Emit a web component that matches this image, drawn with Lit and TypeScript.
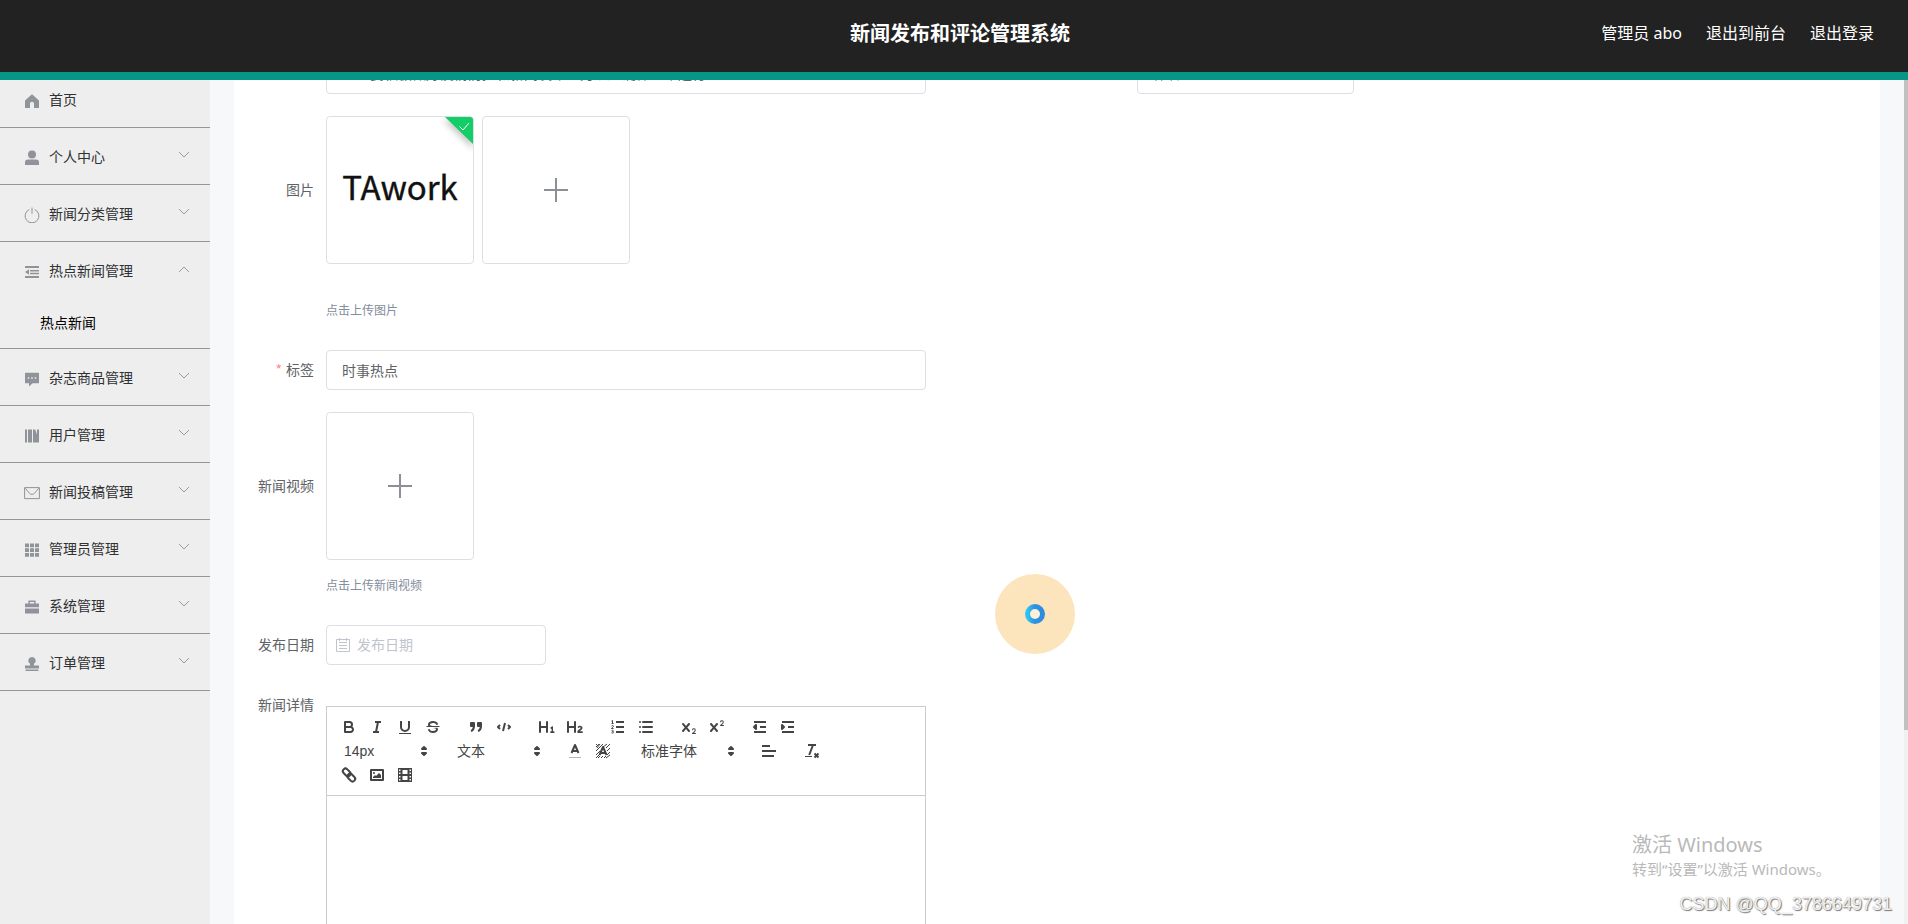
import { LitElement, html, css, svg, nothing } from "lit";
import { customElement, state } from "lit/decorators.js";

const icons: Record<string, unknown> = {
  home: svg`<path d="M8 1.2 1 7.4V15h5v-4.2a2 2 0 0 1 4 0V15h5V7.4z"/>`,
  user: svg`<circle cx="8" cy="4.6" r="4"/><path d="M1 15v-2.4a3 3 0 0 1 3-3h8a3 3 0 0 1 3 3V15z"/>`,
  power: svg`<path class="line" d="M5.3 2.6a6.9 6.9 0 1 0 5.4 0M8 .6v6.2"/>`,
  fold: svg`<path d="M1 2h14v2H1zM6 5.9h9v1.6H6zM6 8.7h9v1.6H6zM1 12h14v2H1zM5 5.2v5.6L1 8z"/>`,
  comment: svg`<path fill-rule="evenodd" d="M1 1.8h14v10.4H8.6L5 15.4v-3.2H1zM3.7 6.2v1.6h1.6V6.2zm3.5 0v1.6h1.6V6.2zm3.5 0v1.6h1.6V6.2z"/>`,
  books: svg`<path d="M1 1.5h2v13H1zM4 1.5h4v13H4zM9 1.5h2.2l1.800 5V1.5h2v13H9z"/>`,
  mail: svg`<path class="line" d="M.6 2.6h14.8v11H.6zM1.2 3.2 5.4 8.2a3.5 3.5 0 0 0 5.2 0l4.2-5"/>`,
  grid: svg`<path d="M1 1.4h4v3.8H1zM6 1.4h4v3.8H6zM11 1.4h4v3.8h-4zM1 6.2h4V10H1zM6 6.2h4V10H6zM11 6.2h4V10h-4zM1 11h4v3.8H1zM6 11h4v3.8H6zM11 11h4v3.8h-4z"/>`,
  cooperate: svg`<path fill-rule="evenodd" d="M4.4 1.6h7.2V4.4H15V8.2H1V4.4h3.4zM5.8 3v1.4h4.4V3zM1 9.4h14v5H1z"/>`,
  stamp: svg`<path d="M8 .9a3.7 3.7 0 0 1 2.2 6.7L9.8 9.4H15v3H1v-3h5.2l-.4-1.8A3.7 3.7 0 0 1 8 .9zM1.6 13.5h12.8v1.4H1.6z"/>`,
};

const q: Record<string, unknown> = {
  加粗: svg`<path class="s" d="M5,4H9.5A2.5,2.5,0,0,1,12,6.500A2.500,2.500,0,0,1,9.500,9H5ZM5,9h5.500A2.500,2.500,0,0,1,13,11.500A2.500,2.500,0,0,1,10.500,14H5Z"/>`,
  斜体: svg`<path class="s" d="M7 4h6M5 14h6M8 14l2-10"/>`,
  下划线: svg`<path class="s" d="M5,3V9a4,4,0,0,0,8,0V3"/><rect class="f" height="1" width="12" x="3" y="15"/>`,
  删除线: svg`<path class="s t" d="M15.500 8.500H2.500"/><path class="f" d="M9.007,8C6.542,7.791,6,7.519,6,6.500,6,5.792,7.283,5,9,5c1.571,0,2.765.679,2.969,1.309a1,1,0,0,0,1.900-.617C13.356,4.106,11.354,3,9,3,6.200,3,4,4.538,4,6.500a3.200,3.200,0,0,0,.5,1.843ZM8.984,10C11.457,10.208,12,10.479,12,11.500c0,.708-1.283,1.500-3,1.500-1.571,0-2.765-.679-2.969-1.309a1,1,0,1,0-1.900.617C4.644,13.894,6.646,15,9,15c2.800,0,5-1.538,5-3.500a3.200,3.200,0,0,0-.5-1.843Z"/>`,
  引用: svg`<path class="f s" d="M4 5h3v3H4zM11 5h3v3h-3zM7,8c0,4.031-3,5-3,5M14,8c0,4.031-3,5-3,5"/>`,
  代码: svg`<path class="s" d="M5 7 3 9l2 2M13 7l2 2-2 2M10 5 8 13"/>`,
  一级标题: svg`<path class="f" d="M10,4V14a1,1,0,0,1-2,0V10H3v4a1,1,0,0,1-2,0V4A1,1,0,0,1,3,4V8H8V4a1,1,0,0,1,2,0Zm6.068,9.209H14.984V8.598a.4.4,0,0,0-.361-.42.630.630,0,0,0-.416.137l-1.700,1.200a.4.4,0,0,0-.06.570l.5.690a.4.4,0,0,0,.54.110l.15-.11v2.430h-1a.410.410,0,0,0-.43.430v.930c0,.25.16.430.430.430h3.430c.26,0,.43-.18.430-.430v-.930a.4.4,0,0,0-.43-.43Z"/>`,
  二级标题: svg`<path class="f" d="M16.740,13.810v.676a.430.430,0,0,1-.5.500H11.900a.430.430,0,0,1-.5-.500v-.500c0-2.300,3.200-2.800,3.200-3.900a.700.700,0,0,0-.8-.740,1.300,1.300,0,0,0-.9.500c-.15.200-.35.200-.57.080l-.51-.37c-.23-.16-.26-.34-.13-.57A2.500,2.500,0,0,1,14,7.850c1.600,0,2.500.95,2.500,2.150,0,2-2.600,2.500-2.800,3.300h2.550a.430.430,0,0,1,.49.510ZM9,3A.990.990,0,0,0,8,4V8H3V4A1,1,0,0,0,1,4V14a1,1,0,0,0,2,0V10H8v4a1,1,0,0,0,2,0V4A1,1,0,0,0,9,3Z"/>`,
  有序列表: svg`<path class="s" d="M7 4h8M7 9h8M7 14h8"/><path class="s t" d="M2.500 5.500h2M3.500 5.500v-3l-1 .5M4.500 10.500h-2c0-.8 2-1.400 2-2.200s-1.500-1-2-.3M2.500 14.800c.7.600 2 .3 2-.5s-1-.7-1-.7 1 0 .9-.7-1.300-.7-1.800-.2"/>`,
  无序列表: svg`<path class="s" d="M6 4h9M6 9h9M6 14h9M3 4h0M3 9h0M3 14h0" stroke-linecap="round"/>`,
  下标: svg`<path class="f" d="M15.500,15H13.861a3.858,3.858,0,0,0,1.914-2.975,1.800,1.800,0,0,0-1.600-1.751A1.921,1.921,0,0,0,12.021,11.700a.5.5,0,1,0,.957.291.914.914,0,0,1,1.053-.725.810.810,0,0,1,.744.762c0,1.076-1.170,1.870-1.939,2.430A1.456,1.456,0,0,0,12,15.500a.5.5,0,0,0,.5.5h3A.5.5,0,0,0,15.500,15Z"/><path class="f" d="M9.650,5.241a1,1,0,0,0-1.409.108L6,7.964,3.759,5.349A1,1,0,0,0,2.192,6.590L4.684,9.500,2.241,12.350A1,1,0,0,0,3.759,13.650L6,11.036,8.241,13.650A1,1,0,1,0,9.760,12.350L7.317,9.500,9.759,6.651A1,1,0,0,0,9.650,5.241Z"/>`,
  上标: svg`<path class="f" d="M15.500,7H13.861a4.015,4.015,0,0,0,1.914-2.975,1.800,1.800,0,0,0-1.600-1.751A1.922,1.922,0,0,0,12.021,3.700a.5.5,0,1,0,.957.291.917.917,0,0,1,1.053-.725.810.810,0,0,1,.744.762c0,1.077-1.164,1.925-1.934,2.486A1.423,1.423,0,0,0,12,7.500a.5.5,0,0,0,.5.5h3A.5.5,0,0,0,15.500,7Z"/><path class="f" d="M9.651,5.241a1,1,0,0,0-1.410.108L6,7.964,3.759,5.349A1,1,0,1,0,2.241,6.649L4.684,9.500,2.241,12.350A1,1,0,1,0,3.759,13.650L6,11.036,8.241,13.650A1,1,0,0,0,9.760,12.350L7.317,9.500,9.759,6.651A1,1,0,0,0,9.651,5.241Z"/>`,
  减少缩进: svg`<path class="s" d="M3 14h12M3 4h12M9 9h6"/><path class="f s" d="M5 7v4L3 9z"/>`,
  增加缩进: svg`<path class="s" d="M3 14h12M3 4h12M9 9h6"/><path class="f s" d="M3 7v4l2-2z"/>`,
  文字颜色: svg`<rect class="f" opacity=".4" x="3" y="15" width="12" height="1"/><path class="s" d="M5.500 11 9 3l3.500 8M11.600 9H6.400"/>`,
  背景颜色: svg`<path class="s t" d="M2 5l3-3M2 9l7-7M2 13 6 9M2 16l4-4M4 16l2-2M9 5l4-3M12 6l4-4M13 9l3-3M13 13l3-3M12 16l4-3M7 16l2-2M10 16l2-2M2 3l1-1M6 2 3 6"/><path class="s" d="M5.500 13 9 5l3.500 8M11.600 11H6.400"/>`,
  对齐: svg`<path class="s" d="M2 9h14M2 14h12M2 4h8"/>`,
  清除格式: svg`<path class="s" d="M5 3h8M6.200 13 10 3M11.500 11.500l4 4M15.500 11.500l-4 4"/><rect class="f" height="1" width="7" x="2" y="14"/>`,
  链接: svg`<g transform="rotate(45 9 9)"><rect class="s" x="1.200" y="6.200" width="8.600" height="5.200" rx="2.600"/><rect class="s" x="8.200" y="6.600" width="8.600" height="5.200" rx="2.600"/></g>`,
  图片: svg`<rect class="s" height="10" width="12" x="3" y="4"/><circle class="f" cx="6" cy="7" r="1"/><path class="f" d="M5 12v-1l2-2 1 1 3-3 2 2v3z"/>`,
  视频: svg`<path class="f" fill-rule="evenodd" d="M2 2h14v14H2zM3 3.500v1.500h1.500V3.500zM3 6.500V8h1.500V6.500zM3 10v1.500h1.500V10zM3 13v1.500h1.500V13zM13.500 3.500v1.500H15V3.500zM13.500 6.500V8H15V6.500zM13.500 10v1.500H15V10zM13.500 13v1.500H15V13zM6.500 4v4h5V4zM6.500 10v4h5v-4z"/>`,
};

interface Entry { label: string; icon: string; children?: string[]; }

const menu: Entry[] = [
  { label: "首页", icon: "home" },
  { label: "个人中心", icon: "user", children: ["修改密码", "个人信息"] },
  { label: "新闻分类管理", icon: "power", children: ["新闻分类"] },
  { label: "热点新闻管理", icon: "fold", children: ["热点新闻"] },
  { label: "杂志商品管理", icon: "comment", children: ["杂志商品"] },
  { label: "用户管理", icon: "books", children: ["用户"] },
  { label: "新闻投稿管理", icon: "mail", children: ["新闻投稿"] },
  { label: "管理员管理", icon: "grid", children: ["管理员"] },
  { label: "系统管理", icon: "cooperate", children: ["轮播图管理"] },
  { label: "订单管理", icon: "stamp", children: ["已完成订单"] },
];

const fontStack = css`"Noto Sans CJK SC", "Noto Sans", sans-serif`;

@customElement("side-menu")
class SideMenu extends LitElement {
  @state() private open = "热点新闻管理";

  static styles = css`
    :host { display: block; width: 210px; flex: none; background: #eee; overflow: hidden; }
    ul { list-style: none; margin: 0; padding: 0; }
    .menu { margin-top: -9px; }
    .entry { border-bottom: 1px solid #969696; }
    .head { display: flex; align-items: center; width: 100%; height: 56px; padding: 0 19px 0 24px; border: 0; background: none;
      font: 14px/20px ${fontStack}; color: #303133; text-align: left; cursor: pointer; }
    .icon { width: 16px; height: 16px; margin: 4px 9px 0 0; fill: #909399; }
    .icon .line { fill: none; stroke: #909399; stroke-width: 1; }
    .text { flex: 1; }
    .arrow { width: 14px; height: 10px; margin-bottom: 2px; fill: none; stroke: #8fa09f; }
    .sub a { display: block; padding: 0 40px 2px; font: 14px/48px ${fontStack}; color: #000; text-decoration: none; }
  `;

  render() {
    return html`<nav aria-label="主菜单"><ul class="menu">
      ${menu.map((m) => {
        const open = this.open === m.label;
        return html`<li class="entry">
          <button class="head" @click=${() => (this.open = open ? "" : m.label)}>
            <svg class="icon" viewBox="0 0 16 16">${icons[m.icon]}</svg>
            <span class="text">${m.label}</span>
            ${m.children ? html`<svg class="arrow" viewBox="0 0 14 10"><path d=${open ? "M2 8l5-5 5 5" : "M2 2l5 5 5-5"} /></svg>` : nothing}
          </button>
          ${open && m.children ? html`<ul class="sub">${m.children.map((c) => html`<li><a href="#">${c}</a></li>`)}</ul>` : nothing}
        </li>`;
      })}
    </ul></nav>`;
  }
}

@customElement("rich-editor")
class RichEditor extends LitElement {
  static styles = css`
    :host { display: block; border: 1px solid #ccc; box-sizing: border-box; }
    .toolbar { display: flex; flex-wrap: wrap; padding: 8px; border-bottom: 1px solid #ccc; }
    .group { display: flex; margin-right: 15px; }
    button { width: 28px; height: 24px; padding: 3px 5px; border: 0; background: none; cursor: pointer; }
    svg { display: block; width: 18px; height: 18px; }
    .s { fill: none; stroke: #444; stroke-width: 2; stroke-linejoin: round; }
    .t { stroke-width: 1; }
    .f { fill: #444; }
    .picker { display: grid; align-items: center; width: 98px; height: 24px; }
    .picker.wide { width: 108px; }
    .picker select, .picker svg { grid-area: 1 / 1; }
    .picker svg { justify-self: end; pointer-events: none; }
    select { appearance: none; width: 100%; height: 24px; padding: 0 9px; border: 0; background: none; outline: 0;
      font: 14px/24px "Liberation Sans", "Noto Sans CJK SC", sans-serif; color: #444; }
    .area { min-height: 300px; padding: 12px 15px; outline: 0; }
  `;

  private group(...names: string[]) {
    return html`<span class="group">${names.map(
      (n) => html`<button type="button" aria-label=${n}><svg viewBox="0 0 18 18">${q[n]}</svg></button>`)}</span>`;
  }

  private picker(label: string, value: string, wide = false) {
    return html`<span class="group"><span class="picker ${wide ? "wide" : ""}">
      <select aria-label=${label}><option>${value}</option></select>
      <svg viewBox="0 0 18 18"><path class="f s" d="M7 11l2 2 2-2zM7 7l2-2 2 2z"/></svg>
    </span></span>`;
  }

  render() {
    return html`
      <div class="toolbar" role="toolbar">
        ${this.group("加粗", "斜体", "下划线", "删除线")}
        ${this.group("引用", "代码")}
        ${this.group("一级标题", "二级标题")}
        ${this.group("有序列表", "无序列表")}
        ${this.group("下标", "上标")}
        ${this.group("减少缩进", "增加缩进")}
        ${this.picker("字号", "14px")}
        ${this.picker("标题", "文本")}
        ${this.group("文字颜色", "背景颜色")}
        ${this.picker("字体", "标准字体", true)}
        ${this.group("对齐")}
        ${this.group("清除格式")}
        ${this.group("链接", "图片", "视频")}
      </div>
      <div class="area" contenteditable="true" role="textbox" aria-label="新闻详情"></div>`;
  }
}

@customElement("app-root")
class AppRoot extends LitElement {
  static styles = css`
    :host { display: flex; flex-direction: column; height: 100vh; overflow: hidden; background: #f6f8fa;
      font: 14px/20px ${fontStack}; color: #606266; }
    * { box-sizing: border-box; }
    header { display: grid; grid-template-columns: 1fr auto 1fr; align-items: center; flex: none; height: 80px;
      padding: 0 34px 6px 46px; background: #222; border-bottom: 8px solid #059688; color: #fff; }
    h1 { grid-column: 2; margin: 0; font-size: 20px; line-height: 30px; font-weight: 700; }
    .links { display: flex; justify-content: flex-end; gap: 24px; font: 16px/24px "Noto Sans", "Noto Sans CJK SC", sans-serif; }
    .links a { color: #fff; text-decoration: none; }
    .body { display: flex; flex: 1; min-height: 0; }
    main { flex: 1; min-width: 0; margin: 0 24px; padding: 0 12px; background: #fff; overflow: hidden; }
    form { display: flex; flex-direction: column; gap: 22px; margin-top: -26px; }
    .row { display: grid; grid-template-columns: 1fr 1fr; }
    .row .label { line-height: 32px; }
    .field { display: grid; grid-template-columns: 80px minmax(0, 1fr); }
    .label { padding-right: 12px; text-align: right; line-height: 38px; }
    .label.tall { line-height: 146px; }
    .label.short { line-height: 34px; }
    .req { color: #f56c6c; opacity: .8; margin-right: 4px; }
    input { width: 600px; max-width: 100%; height: 40px; padding: 0 15px; border: 1px solid #dcdfe6; border-radius: 4px; background: #fff;
      font: 14px/20px ${fontStack}; color: #606266; outline: 0; }
    .row input { padding-bottom: 2px; }
    .row .author { width: 217px; }
    .boxes { display: flex; gap: 8px; }
    .box { position: relative; display: grid; place-items: center; width: 148px; height: 148px; padding: 0; border: 1px solid #dcdfe6; border-radius: 4px;
      background: #fff; overflow: hidden; }
    .plus { width: 24px; height: 24px; stroke: #8c8f96; stroke-width: 2; }
    .thumb { width: 146px; height: 146px; }
    .thumb text { font: 33px "Noto Sans CJK SC", sans-serif; fill: #111; stroke: #111; stroke-width: .4; }
    .done { position: absolute; top: 0; right: 0; width: 48px; height: 48px; }
    .tip { margin: 7px 0 0; font-size: 12px; line-height: 36px; color: #838d9b; }
    .tip.far { margin-top: 28px; }
    .date { display: grid; align-items: center; width: 220px; }
    .date input, .date svg { grid-area: 1 / 1; }
    .date input { width: 100%; padding: 0 15px 2px 30px; }
    .date input::placeholder { color: #c0c4cc; opacity: 1; }
    .date svg { width: 14px; height: 14px; margin-left: 10px; z-index: 1; fill: none; stroke: #c0c4cc; }
    rich-editor { width: 600px; max-width: 100%; margin-top: 19px; }
    .scroll { flex: none; width: 4px; background: #f1f1f1; }
    .thumbbar { height: 77%; background: #c1c1c1; }
    .busy { position: absolute; left: 995px; top: 574px; width: 80px; height: 80px; pointer-events: none; }
    .activate { position: absolute; right: 78px; bottom: 44px; width: 198px; color: #b9b9b9; font-family: "Noto Sans", "Noto Sans CJK SC", sans-serif; pointer-events: none; white-space: nowrap; }
    .activate p { margin: 0; font-size: 15px; line-height: 22px; }
    .activate .big { font-size: 20px; line-height: 26px; }
    .credit { position: absolute; right: 16px; bottom: 10px; font: 18px/20px "Liberation Sans", sans-serif; color: #f0f0f0; text-shadow: 1px 1px 1px #777, 0 0 1px #999; pointer-events: none; }
  `;

  private plus = html`<svg class="plus" viewBox="0 0 24 24"><path d="M12 0v24M0 12h24"/></svg>`;

  render() {
    return html`
      <header>
        <h1>新闻发布和评论管理系统</h1>
        <nav class="links"><a href="#">管理员 abo</a><a href="#">退出到前台</a><a href="#">退出登录</a></nav>
      </header>
      <div class="body">
        <side-menu></side-menu>
        <main>
          <form>
            <div class="row">
              <div class="field">
                <label class="label" for="title">标题</label>
                <input id="title" value="企业要积极做好疫情防控和新闻发布全力以赴确保正常运行" />
              </div>
              <div class="field">
                <label class="label" for="author">作者</label>
                <input id="author" class="author" value="作者" />
              </div>
            </div>
            <div class="field">
              <span class="label tall">图片</span>
              <div>
                <div class="boxes">
                  <div class="box">
                    <svg class="thumb" viewBox="0 0 146 146"><text x="73" y="83" text-anchor="middle">TAwork</text></svg>
                    <svg class="done" viewBox="0 0 48 48">
                      <defs><filter id="soft" x="-50%" y="-50%" width="200%" height="200%"><feGaussianBlur stdDeviation="3"/></filter></defs>
                      <path d="M18 3h30v29z" fill="#000" opacity=".22" filter="url(#soft)"/>
                      <path d="M20 0h28v27z" fill="#13ce66"/>
                      <path d="M34.500 9.500l3.500 3.500 6-7" fill="none" stroke="#fff" stroke-width="1"/>
                    </svg>
                  </div>
                  <button type="button" class="box" aria-label="上传图片">${this.plus}</button>
                </div>
                <p class="tip far">点击上传图片</p>
              </div>
            </div>
            <div class="field">
              <label class="label" for="tag"><span class="req">*</span>标签</label>
              <input id="tag" value="时事热点" />
            </div>
            <div class="field">
              <span class="label tall">新闻视频</span>
              <div>
                <button type="button" class="box" aria-label="上传新闻视频">${this.plus}</button>
                <p class="tip">点击上传新闻视频</p>
              </div>
            </div>
            <div class="field">
              <label class="label" for="date">发布日期</label>
              <div class="date">
                <input id="date" placeholder="发布日期" />
                <svg viewBox="0 0 14 14"><path d="M.5 1.500h13v12H.5zM3 4.500h8M3 7.500h8M3 10.500h8M3.500 0v3M10.500 0v3"/></svg>
              </div>
            </div>
            <div class="field">
              <span class="label short">新闻详情</span>
              <rich-editor></rich-editor>
            </div>
          </form>
        </main>
        <div class="scroll"><div class="thumbbar"></div></div>
      </div>
      <svg class="busy" viewBox="0 0 80 80">
        <defs><linearGradient id="ring"><stop offset="0" stop-color="#2fc4f2"/><stop offset=".45" stop-color="#2d93e4"/><stop offset="1" stop-color="#2d8be0"/></linearGradient></defs>
        <circle cx="40" cy="40" r="40" fill="#fce4bd"/>
        <circle cx="40" cy="40" r="7.500" fill="#fdf0d8" stroke="url(#ring)" stroke-width="5"/>
      </svg>
      <div class="activate"><p class="big">激活 Windows</p><p>转到“设置”以激活 Windows。</p></div>
      <div class="credit">CSDN @QQ_3786649731</div>`;
  }
}
